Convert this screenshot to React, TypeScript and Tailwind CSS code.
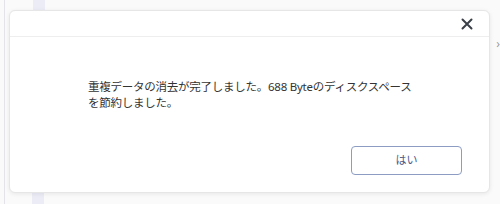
import React from "react";

export default function App() {
  return (
    <div
      className="relative w-[500px] h-[204px] bg-[#fafafa] overflow-hidden pl-[9px] pt-[10px]"
      style={{ fontFamily: '"Noto Sans", "Noto Sans CJK JP", sans-serif' }}
    >
      {/* background page hints */}
      <div className="absolute left-[4px] top-0 h-full w-px bg-[#e4e4e8]" />
      <div className="absolute left-[33px] top-0 w-[12px] h-[12px] bg-[#ececf6]" />
      <div className="absolute left-[32px] bottom-0 w-[12px] h-[12px] bg-[#ececf6]" />
      <div className="absolute right-[0px] top-[38px] text-[#9a9a9a] text-[12px] leading-none">›</div>

      {/* dialog */}
      <div className="relative w-[481px] h-[183px] bg-white rounded-[6px] border border-[#e6e6e6] shadow-[0_1px_4px_rgba(0,0,0,0.08)] flex flex-col">
        <div className="h-[26px] border-b border-[#eeeeee] flex items-center justify-end pr-[16px]">
          <svg width="12" height="12" viewBox="0 0 12 12" className="mt-[1px]">
            <path d="M1.5 1.5 L10.5 10.5 M10.5 1.5 L1.5 10.5" stroke="#3a3f47" strokeWidth="2" strokeLinecap="round" />
          </svg>
        </div>
        <div className="flex-1 flex flex-col pl-[78px] pr-[27px]">
          <p className="mt-[42px] text-[11.5px] leading-[16px] text-[#333] tracking-[-0.25px]">
            重複データの消去が完了しました。688 Byteのディスクスペース
            <br />
            を節約しました。
          </p>
          <div className="mt-auto mb-[17px] flex justify-end">
            <button className="w-[111px] h-[29px] rounded-[4px] border border-[#8c9cc2] bg-white text-[11px] text-[#4b5b8c]">
              はい
            </button>
          </div>
        </div>
      </div>
    </div>
  );
}
